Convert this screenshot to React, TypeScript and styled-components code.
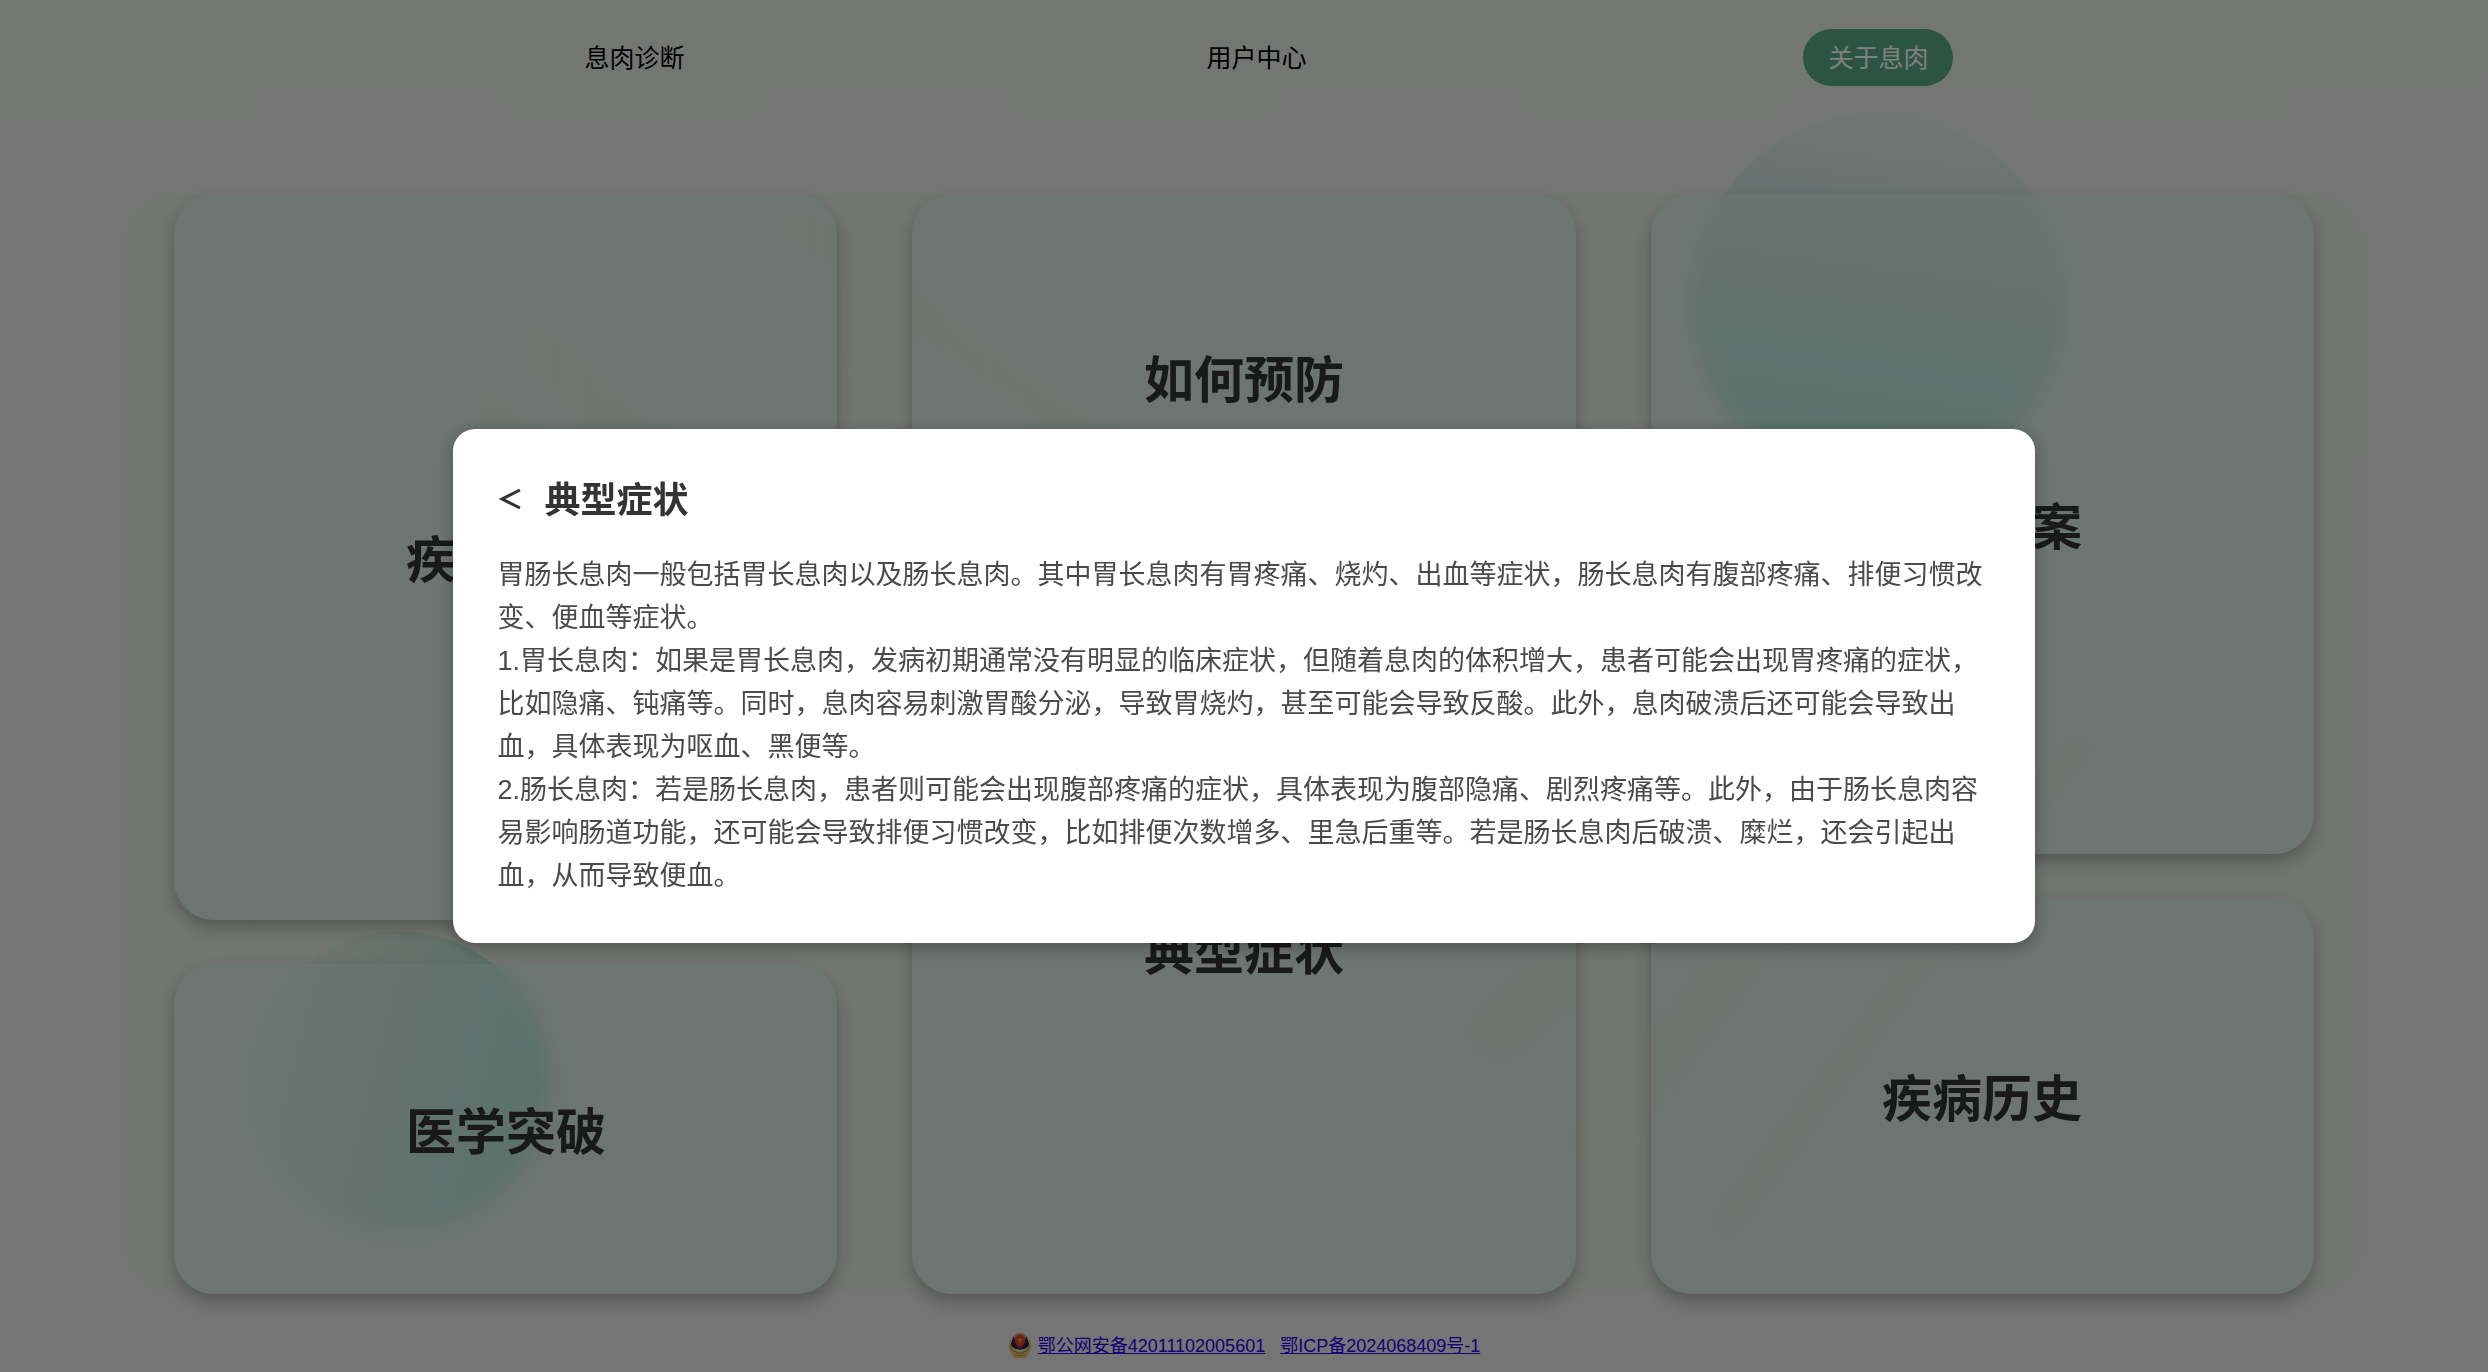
import React from 'react';
import styled, { createGlobalStyle } from 'styled-components';

const GlobalStyle = createGlobalStyle`
  * { box-sizing: border-box; }
  body {
    margin: 0;
    background: #e9ece9;
    font-family: "Liberation Sans", "Noto Sans CJK SC", sans-serif;
    color: #000;
  }
`;

const Page = styled.div`
  position: relative;
  isolation: isolate;
  min-height: 100vh;
  overflow: hidden;
  display: flex;
  flex-direction: column;
  background: linear-gradient(180deg, #e8ece9 0%, #e9ebe8 40%, #e9eae9 100%);
`;

const Nav = styled.nav`
  display: grid;
  grid-template-columns: repeat(3, 1fr);
  justify-items: center;
  padding: 29px 12% 0 13%;
`;

const NavLink = styled.a<{ $active?: boolean }>`
  padding: 11px 25px 9px;
  border-radius: 29px;
  font-size: 25px;
  line-height: 37px;
  text-decoration: none;
  color: ${(p) => (p.$active ? '#fff' : '#000')};
  background: ${(p) => (p.$active ? '#58a988' : 'transparent')};
`;

const Board = styled.main`
  display: flex;
  gap: 75px;
  width: 90%;
  height: 1100px;
  margin: 108px auto 0;
  padding: 0 50px;
  border-radius: 50px;
  background: rgba(220, 234, 215, 0.35);
`;

const Column = styled.div<{ $rows: string }>`
  flex: 1;
  display: grid;
  grid-template-rows: ${(p) => p.$rows};
  gap: 44px;
`;

const Card = styled.button<{ $lowered: boolean }>`
  padding: ${(p) => (p.$lowered ? '8px' : '0')} 0 0;
  border: 0;
  border-radius: 40px;
  background: rgba(205, 234, 228, 0.5);
  backdrop-filter: blur(10px);
  box-shadow: 0 8px 16px rgba(0, 0, 0, 0.25);
  font-family: inherit;
  font-size: 50px;
  font-weight: 700;
  line-height: 72px;
  color: #333;
`;

const Blob = styled.div<{ $x: number; $y: number; $r: number; $angle: number }>`
  position: absolute;
  z-index: -1;
  left: ${(p) => p.$x}%;
  top: ${(p) => p.$y}px;
  width: ${(p) => p.$r * 2}px;
  height: ${(p) => p.$r * 2}px;
  border-radius: 50%;
  background: linear-gradient(
    ${(p) => p.$angle}deg,
    rgba(190, 225, 225, 0) 0%,
    rgba(180, 222, 215, 0.55) 35%,
    #7cd6c0 90%
  );
`;

const Ribbons = styled.svg`
  position: absolute;
  z-index: -1;
  inset: 0;
  width: 100%;
  height: 100%;
`;

const Footer = styled.footer`
  display: flex;
  justify-content: center;
  align-items: center;
  gap: 15px;
  padding: 38px 0 12px;
  font-size: 18px;
  line-height: 28px;
`;

const Record = styled.span`
  display: flex;
  align-items: center;
  gap: 6px;
`;

const FooterLink = styled.a`
  color: #2a00ee;
  &:visited { color: #2a00ee; }
`;

const Overlay = styled.div`
  position: fixed;
  inset: 0;
  display: flex;
  align-items: center;
  justify-content: center;
  background: rgba(0, 0, 0, 0.5);
`;

const Dialog = styled.section`
  box-sizing: content-box;
  width: 60%;
  padding: 46px 45px 45px;
  border-radius: 22px;
  background: #fff;
  box-shadow: 0 4px 16px rgba(0, 0, 0, 0.3);
`;

const DialogHead = styled.header`
  display: flex;
  align-items: center;
  gap: 24px;
  margin-bottom: 27px;
`;

const Back = styled.button`
  display: flex;
  padding: 0;
  border: 0;
  background: none;
  color: #333;
`;

const DialogTitle = styled.h2`
  margin: 0;
  font-size: 36px;
  line-height: 52px;
  color: #333;
`;

const Body = styled.p`
  margin: 0;
  font-size: 27px;
  line-height: 43px;
  color: #4a4a4a;
`;

const columns = [
  { rows: '66fr 30fr', lowered: true, titles: ['疾病概述', '医学突破'] },
  { rows: '34fr 62fr', lowered: false, titles: ['如何预防', '典型症状'] },
  { rows: '60fr 36fr', lowered: true, titles: ['治疗方案', '疾病历史'] },
];

const paragraphs = [
  '胃肠长息肉一般包括胃长息肉以及肠长息肉。其中胃长息肉有胃疼痛、烧灼、出血等症状，肠长息肉有腹部疼痛、排便习惯改变、便血等症状。',
  '1.胃长息肉：如果是胃长息肉，发病初期通常没有明显的临床症状，但随着息肉的体积增大，患者可能会出现胃疼痛的症状，比如隐痛、钝痛等。同时，息肉容易刺激胃酸分泌，导致胃烧灼，甚至可能会导致反酸。此外，息肉破溃后还可能会导致出血，具体表现为呕血、黑便等。',
  '2.肠长息肉：若是肠长息肉，患者则可能会出现腹部疼痛的症状，具体表现为腹部隐痛、剧烈疼痛等。此外，由于肠长息肉容易影响肠道功能，还可能会导致排便习惯改变，比如排便次数增多、里急后重等。若是肠长息肉后破溃、糜烂，还会引起出血，从而导致便血。',
];

const PoliceBadge = () => (
  <svg width="24" height="26" viewBox="0 0 24 26" aria-hidden="true">
    <path d="M3 6C0 9 0 16 3 20l3 5h12l3-5c3-4 3-11 0-14l-2 9-7 4-7-4z" fill="#e8c070" />
    <path d="M12 1 19 4l2 7c-1 4-5 5-9 6-4-1-8-2-9-6l2-7z" fill="#26204e" />
    <path d="M12 0c4 0 6 2 6 5l-1 2H7L6 5c0-3 2-5 6-5z" fill="#d89a50" />
    <path d="M12 2c4 0 5 2 5 5s-2 7-5 8c-3-1-5-5-5-8s1-5 5-5z" fill="#e03a28" />
    <path d="m12 4 1 2h2l-2 2 1 2-2-1-2 1 1-2-2-2h2z" fill="#f08040" />
    <path d="M6 18c4 3 8 3 12 0M7 22c3 1 7 1 10 0M3 12c0 3 1 5 3 7M21 12c0 3-1 5-3 7" stroke="#b88438" fill="none" />
  </svg>
);

export default function App() {
  return (
    <>
      <GlobalStyle />
      <Page>
        <Ribbons viewBox="0 0 2488 1372" preserveAspectRatio="none" aria-hidden="true">
          <g fill="none" stroke="#d4dcae" strokeOpacity="0.1" strokeLinecap="round">
            <path d="M800 225 1130 470" strokeWidth="50" />
            <path d="M705 240 890 400" strokeWidth="12" />
            <path d="M540 350 700 500" strokeWidth="60" />
            <path d="M490 410 560 480" strokeWidth="50" />
            <path d="M1500 1030 1640 900" strokeWidth="70" />
            <path d="M1600 1140 1760 930" strokeWidth="60" />
            <path d="M1728 1220 2080 745" strokeWidth="36" />
          </g>
        </Ribbons>
        <Blob $x={68} $y={113} $r={186} $angle={188} />
        <Blob $x={10} $y={931} $r={150} $angle={104} />
        <Nav>
          <NavLink href="#diagnosis">息肉诊断</NavLink>
          <NavLink href="#user">用户中心</NavLink>
          <NavLink href="#about" $active>关于息肉</NavLink>
        </Nav>
        <Board>
          {columns.map((column) => (
            <Column key={column.rows} $rows={column.rows}>
              {column.titles.map((title) => (
                <Card key={title} type="button" $lowered={column.lowered}>
                  {title}
                </Card>
              ))}
            </Column>
          ))}
        </Board>
        <Footer>
          <Record>
            <PoliceBadge />
            <FooterLink href="#police">鄂公网安备42011102005601</FooterLink>
          </Record>
          <FooterLink href="#icp">鄂ICP备2024068409号-1</FooterLink>
        </Footer>
      </Page>
      <Overlay>
        <Dialog role="dialog" aria-modal="true" aria-labelledby="dialog-title">
          <DialogHead>
            <Back type="button" aria-label="返回">
              <svg width="23" height="28" viewBox="0 0 23 28" fill="none" stroke="currentColor" strokeWidth="3" aria-hidden="true">
                <path d="M22 3 4 12 22 21" />
              </svg>
            </Back>
            <DialogTitle id="dialog-title">典型症状</DialogTitle>
          </DialogHead>
          {paragraphs.map((text) => (
            <Body key={text}>{text}</Body>
          ))}
        </Dialog>
      </Overlay>
    </>
  );
}
